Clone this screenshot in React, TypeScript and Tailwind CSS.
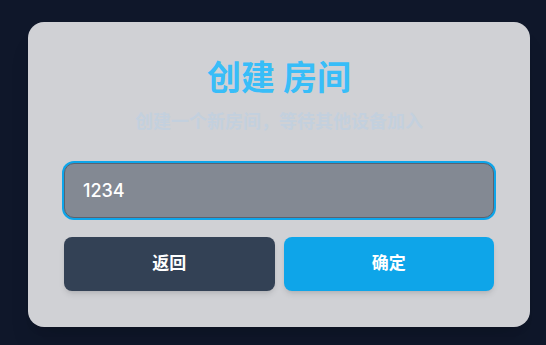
import React, { useState } from 'react';

const App: React.FC = () => {
  const [code, setCode] = useState('1234');

  return (
    <div
      className="min-h-screen w-full bg-[#0f172a] pt-[22px] pl-[28px]"
      style={{ fontFamily: 'Inter, "Noto Sans CJK SC", sans-serif' }}
    >
      <div className="w-[502px] h-[305px] rounded-2xl bg-[#d0d1d5] p-9 shadow-xl">
        <h1 className="text-center text-[34px] leading-[40px] font-bold text-[#38bdf8]">创建 房间</h1>
        <p className="mt-[10px] text-center text-[18px] leading-[28px] font-semibold text-[#c3d0de]">
          创建一个新房间，等待其他设备加入
        </p>

        <input
          value={code}
          onChange={(e) => setCode(e.target.value)}
          className="mt-[27px] block w-full h-[55px] rounded-[10px] border border-[#5b6270] bg-[#838993] px-[18px] text-[18px] font-medium text-white outline-none ring-2 ring-[#0ea5e9]"
        />

        <div className="mt-[19px] grid grid-cols-2 gap-[9px]">
          <button className="h-[54px] rounded-lg bg-[#334155] text-[17px] font-bold text-white shadow-md">
            返回
          </button>
          <button className="h-[54px] rounded-lg bg-[#0ea5e9] text-[17px] font-bold text-white shadow-md">
            确定
          </button>
        </div>
      </div>
    </div>
  );
};

export default App;
